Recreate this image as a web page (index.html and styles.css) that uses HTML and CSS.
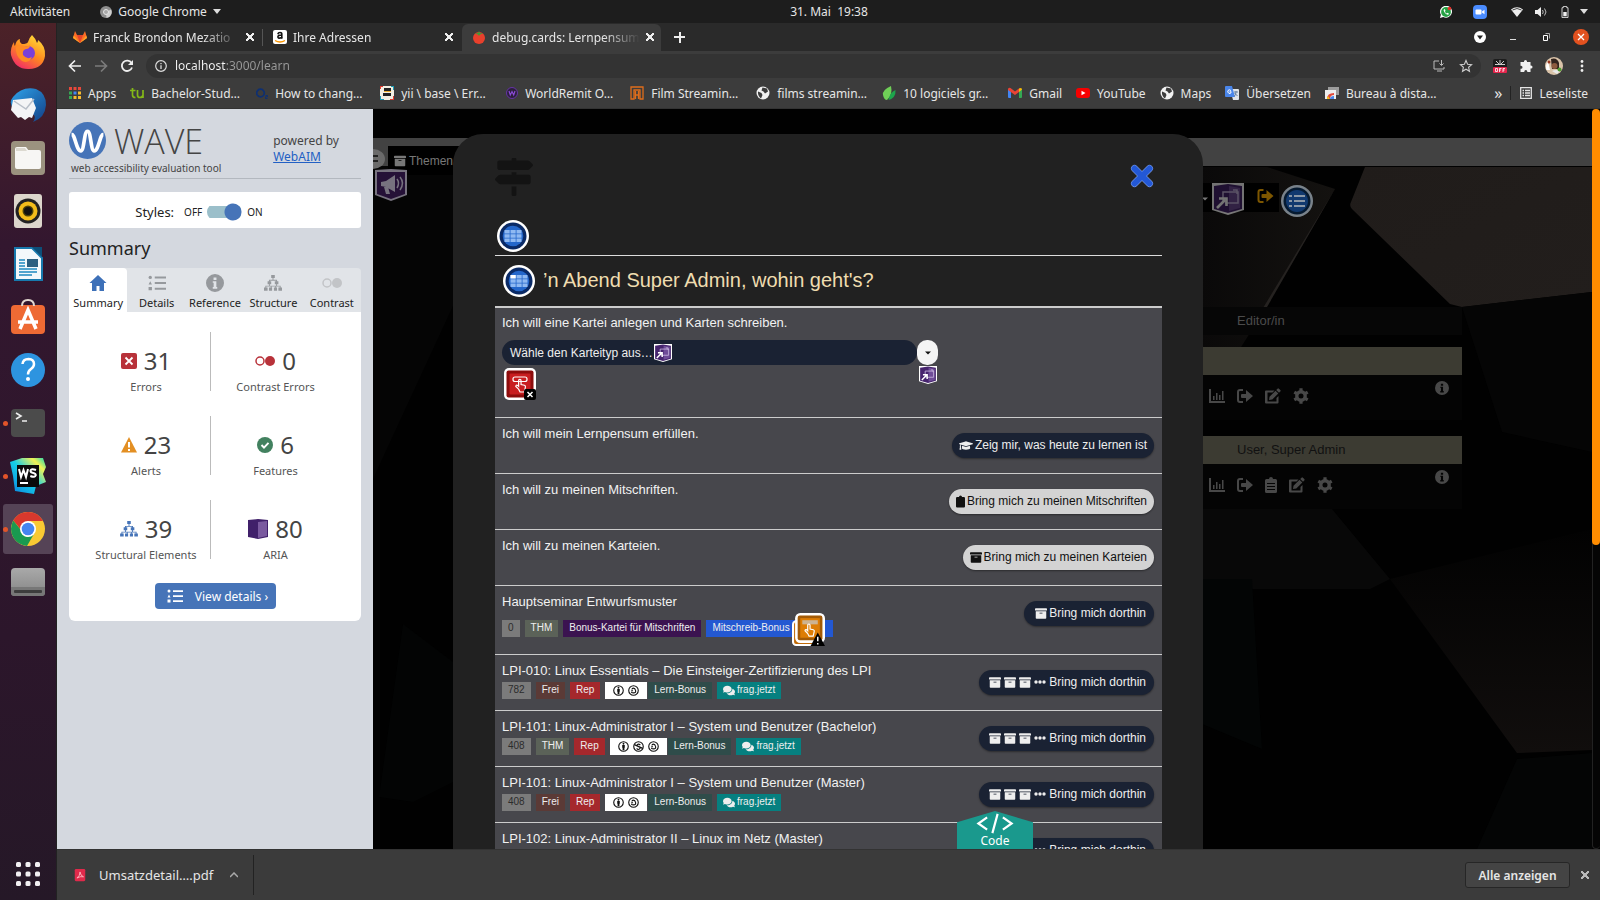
FILE: index.html
```html
<!DOCTYPE html>
<html lang="de">
<head>
<meta charset="utf-8">
<title>debug.cards: Lernpensum</title>
<link rel="stylesheet" href="styles.css">
</head>
<body>
<svg class="defs" aria-hidden="true">
  <defs>
    <linearGradient id="gFire" x1="0.8" y1="0" x2="0.2" y2="1"><stop offset="0" stop-color="#ffe03a"/><stop offset=".5" stop-color="#ff8a1e"/><stop offset="1" stop-color="#f0246e"/></linearGradient>
    <linearGradient id="gBird" x1="0" y1="0" x2="1" y2="1"><stop offset="0" stop-color="#2fa3ea"/><stop offset="1" stop-color="#123f86"/></linearGradient>
    <linearGradient id="gWs" x1="0" y1="1" x2="1" y2="0"><stop offset="0" stop-color="#0a7fe0"/><stop offset=".5" stop-color="#15cfe8"/><stop offset=".8" stop-color="#f3f254"/><stop offset="1" stop-color="#10d6b4"/></linearGradient>
    <linearGradient id="gDisk" x1="0" y1="0" x2="0" y2="1"><stop offset="0" stop-color="#a9a9a9"/><stop offset="1" stop-color="#868686"/></linearGradient>
  </defs>
  <symbol id="archive" viewBox="0 0 512 512"><path d="M32 448c0 17.7 14.3 32 32 32h384c17.7 0 32-14.3 32-32V160H32v288zm160-212c0-6.600 5.400-12 12-12h104c6.600 0 12 5.400 12 12v8c0 6.600-5.400 12-12 12H204c-6.600 0-12-5.400-12-12v-8zM480 32H32C14.300 32 0 46.300 0 64v48c0 8.800 7.200 16 16 16h480c8.800 0 16-7.200 16-16V64c0-17.700-14.300-32-32-32z"/></symbol>
  <symbol id="cap" viewBox="0 0 640 512"><path d="M622.340 153.200L343.400 67.500c-15.200-4.670-31.600-4.670-46.790 0L17.660 153.200c-23.540 7.230-23.540 38.360 0 45.590l48.630 14.940c-10.670 13.190-17.230 29.280-17.880 46.900C38.780 266.150 32 276.110 32 288c0 10.780 5.680 19.850 13.860 25.650L20.330 428.530C18.110 438.520 25.710 448 35.940 448h56.110c10.240 0 17.840-9.480 15.620-19.470L82.140 313.650C90.320 307.850 96 298.780 96 288c0-11.570-6.470-21.250-15.660-26.870.76-15.020 8.440-28.300 20.690-36.720L296.600 284.500c9.060 2.780 26.440 6.250 46.790 0l278.950-85.700c23.550-7.240 23.550-38.360 0-45.600zM352.790 315.090c-28.530 8.760-52.840 3.920-65.590 0l-145.020-44.550L128 384c0 35.350 85.960 64 192 64s192-28.650 192-64l-14.180-113.470-145.030 44.560z"/></symbol>
  <symbol id="signs" viewBox="0 0 512 512"><path d="M507.310 84.690L464 41.370c-6-6-14.140-9.370-22.630-9.370H288V16c0-8.840-7.160-16-16-16h-32c-8.840 0-16 7.160-16 16v16H56c-13.250 0-24 10.750-24 24v80c0 13.250 10.750 24 24 24h385.370c8.490 0 16.620-3.370 22.630-9.370l43.310-43.310c6.250-6.260 6.250-16.380 0-22.630zM224 496c0 8.840 7.160 16 16 16h32c8.840 0 16-7.160 16-16V384h-64v112zm232-272H288v-32h-64v32H70.630c-8.490 0-16.620 3.370-22.630 9.370L4.690 276.690c-6.250 6.250-6.250 16.380 0 22.630L48 342.630c6 6 14.140 9.370 22.630 9.370H456c13.250 0 24-10.750 24-24v-80c0-13.250-10.750-24-24-24z"/></symbol>
  <symbol id="comments" viewBox="0 0 576 512"><path d="M416 192c0-88.400-93.100-160-208-160S0 103.600 0 192c0 34.300 14.100 65.900 38 92-13.400 30.200-35.500 54.200-35.800 54.500-2.200 2.300-2.800 5.700-1.500 8.700S4.800 352 8 352c36.600 0 66.900-12.300 88.700-25 32.200 15.700 70.300 25 111.300 25 114.900 0 208-71.600 208-160zm122 220c23.900-26 38-57.700 38-92 0-66.900-53.500-124.200-129.300-148.100.9 6.600 1.300 13.300 1.300 20.100 0 105.900-107.700 192-240 192-10.800 0-21.300-.8-31.700-1.900C207.800 439.600 281.800 480 368 480c41 0 79.100-9.200 111.300-25 21.800 12.700 52.100 25 88.700 25 3.200 0 6.100-1.900 7.300-4.800 1.300-2.900.7-6.300-1.500-8.700-.3-.3-22.400-24.200-35.800-54.500z"/></symbol>
  <symbol id="clipboard" viewBox="0 0 12 16"><path d="M1.500 2H4a2 2 0 0 1 4 0h2.500A1.500 1.500 0 0 1 12 3.500v11a1.500 1.500 0 0 1-1.500 1.500h-9A1.500 1.500 0 0 1 0 14.500v-11A1.500 1.500 0 0 1 1.500 2z"/></symbol>
  <symbol id="cliplist" viewBox="0 0 12 16"><path fill-rule="evenodd" d="M1.500 2H4a2 2 0 0 1 4 0h2.500A1.500 1.500 0 0 1 12 3.500v11a1.500 1.500 0 0 1-1.500 1.500h-9A1.500 1.500 0 0 1 0 14.500v-11A1.500 1.500 0 0 1 1.500 2zM2 6v1h8V6zM2 9v1h8V9zM2 12v1h8v-1z"/></symbol>
  <symbol id="chart" viewBox="0 0 16 14"><path d="M0 0h2v12h14v2H0zM4 7h1.500v4H4zM7 4h1.500v7H7zM10 6h1.500v5H10zM13 2h1.500v9H13z"/></symbol>
  <symbol id="signout" viewBox="0 0 16 14"><path d="M6 0v2H3Q2 2 2 3v8q0 1 1 1h3v2H3q-3 0-3-3V3q0-3 3-3zM9 1l7 6-7 6v-4H5q-1 0-1-1V6q0-1 1-1h4z"/></symbol>
  <symbol id="edit" viewBox="0 0 16 16"><path d="M1 2.500h8.500l-2 2H2.500v9h9V10l2-2v6.500q0 1-1 1H1q-1 0-1-1v-11q0-1 1-1zM12.500.7q.7-.7 1.400 0l1.400 1.400q.7.7 0 1.400L14 4.800 11.200 2zM10.500 2.700l2.800 2.800-6 6L4 12l.5-3.300z"/></symbol>
  <symbol id="cog" viewBox="0 0 16 16"><circle cx="8" cy="8" r="4.200" fill="none" stroke="currentColor" stroke-width="3.400"/><g stroke="currentColor" stroke-width="3.200"><path d="M8 .3v3M8 12.700v3M1.300 4.200l2.600 1.500M12.100 10.300l2.600 1.500M1.300 11.800l2.600-1.500M12.100 5.700l2.600-1.500"/></g></symbol>
  <symbol id="info" viewBox="0 0 16 16"><path fill-rule="evenodd" d="M8 0a8 8 0 1 1 0 16A8 8 0 0 1 8 0zM6.700 3v2.300h2.600V3zM6 6.500v1.300h.8v3.700H6V13h4v-1.500h-.8v-5z"/></symbol>
  <symbol id="list" viewBox="0 0 16 14"><circle cx="2" cy="2" r="1.500"/><path d="M.5 8.400 2 5.500l1.500 2.900zM.5 10.500h3v3h-3zM6 1.200h10v1.700H6zM6 6.200h10v1.700H6zM6 11.200h10v1.700H6z"/></symbol>
  <symbol id="tree" viewBox="0 0 20 18"><path d="M8 0h4v3.500H8zM9.500 3.500h1v3h-1zM5.500 5.500h9v1h-9zM5.500 5.500h1v2h-1zM13.500 5.500h1v2h-1zM4 7h4v3.500H4zM12 7h4v3.500h-4zM5.500 10.500h1v2h-1zM13.500 10.500h1v2h-1zM1.500 12h17v1h-17zM1.500 12h1v2h-1zM7.500 12h1v2h-1zM12.500 12h1v2h-1zM17.500 12h1v2h-1zM0 14h4v3.500H0zM5.500 14h3.500v3.500H5.500zM11 14h3.500v3.500H11zM16 14h4v3.500h-4z"/></symbol>
  <symbol id="contrast" viewBox="0 0 20 10"><circle cx="5" cy="5" r="4" fill="none" stroke="currentColor" stroke-width="1.500"/><circle cx="15" cy="5" r="5"/></symbol>
  <symbol id="globe" viewBox="0 0 14 14"><circle cx="7" cy="7" r="6.500" fill="#f2f2f2"/><path d="M2 5.500 5.500 7l1 2-1.500 3.500Q1.500 10 2 5.500zM6.500 1.500 11 2.500l1 3-3 2-1.500-2-2-1z" fill="#3c3c3c"/></symbol>
  <symbol id="gridbadge" viewBox="0 0 32 32"><circle cx="16" cy="16" r="16" fill="#fff"/><circle cx="16" cy="16" r="13.500" fill="#0a2a66"/><circle cx="16" cy="16" r="10.300" fill="#2467cb"/><path d="M7.500 10h5.200v3.400H7.500zM13.500 10h5.200v3.400h-5.200zM19.500 10h5v3.400h-5zM7.500 14.300h5.200v3.400H7.500zM13.500 14.300h5.200v3.400h-5.200zM19.500 14.300h5v3.400h-5zM7.500 18.600h5.200V22H7.500zM13.500 18.600h5.200V22h-5.200zM19.500 18.600h5V22h-5z" fill="#8fb9f2"/></symbol>
  <symbol id="popup" viewBox="0 0 32 32"><path d="M0 0h32v27l-16 5-16-5z" fill="#fff"/><path d="M2 3 16 1l14 2v23l-14 4-14-4z" fill="#46246e"/><path d="M17 3l11 2v20l-11 3z" fill="#6f4c98"/><path d="M11 20V9h15v11H13M21 7h4v4" fill="none" stroke="#c9b6df" stroke-width="1.500"/><path d="M5 25l8-8M7 15.500h7.500V23" fill="none" stroke="#fff" stroke-width="2.600"/></symbol>
  <symbol id="horn" viewBox="0 0 32 32"><path d="M0 1 16 0l16 1v25l-16 6L0 26z" fill="#77737f"/><path d="M2 3h28v22l-14 5-14-5z" fill="#251137"/><path d="M6 13l5-1 9-6v17l-9-5-5-1zM9 18h4l2 7h-4z" fill="#77737f"/><path d="M22 10q3 4 0 9M25 8q5 6 0 13" fill="none" stroke="#77737f" stroke-width="1.500"/></symbol>
  <symbol id="hand" viewBox="0 0 16 18"><path d="M6 14 3 11q0-2 2-1l1 1V5q0-1.500 1.300-1.500T8.600 5v4l3.600.8q1.500.5 1 2.200L12 17H7.500z" fill="none" stroke="#fff" stroke-width="1.300"/></symbol>
  <symbol id="by" viewBox="0 0 12 12"><circle cx="6" cy="6" r="5.200" fill="#fff" stroke="#111" stroke-width="1.200"/><circle cx="6" cy="3" r="1"/><path d="M4.600 4.300h2.800v3H7v2.900H5V7.300h-.4z"/></symbol>
  <symbol id="nd" viewBox="0 0 12 12"><circle cx="6" cy="6" r="5.200" fill="#fff" stroke="#111" stroke-width="1.200"/><path d="M4.300 4.800Q4.300 3.400 6 3.400T8.300 6 6 8.600 4.300 7.400M3.500 6.200h2" fill="none" stroke="#111" stroke-width="1.200"/></symbol>
  <symbol id="nc" viewBox="0 0 12 12"><circle cx="6" cy="6" r="5.200" fill="#fff" stroke="#111" stroke-width="1.200"/><path d="M8 4.300Q6 2.600 4.800 4t1.400 2.200 1 2.400T4 8M1.500 4l9 4" fill="none" stroke="#111" stroke-width="1.300"/></symbol>
</svg>

<header class="topbar">
  <span>Aktivitäten</span>
  <span class="app-menu">
    <svg class="i12" viewBox="0 0 12 12"><circle cx="6" cy="6" r="6" fill="#8e8e8e"/><path d="M6 6 11 3.500A6 6 0 0 1 6.500 12z" fill="#cfcfcf"/><circle cx="6" cy="6" r="2.500" fill="#a8a8a8" stroke="#e5e5e5"/></svg>
    Google Chrome
    <svg class="i8" viewBox="0 0 8 6"><path d="M0 0h8L4 5z" fill="#ddd"/></svg>
  </span>
  <time class="clock">31. Mai&nbsp; 19:38</time>
  <span class="tray">
    <svg class="i12" viewBox="0 0 12 12"><path d="M0 12l.9-3.200A6 6 0 1 1 3.200 11z" fill="#fff"/><circle cx="6" cy="6" r="4.900" fill="#25a244"/><path d="M4 3.200q-1 1 .4 3t3.300 2.500q1 0 1.300-1L7.500 6.800l-.8.7Q5.500 7 4.900 5.700l.6-.8L5 3.200z" fill="#fff"/><circle cx="9.500" cy="2.500" r="1.800" fill="#e5302a"/></svg>
    <svg class="i14 zoomapp" viewBox="0 0 14 14"><rect width="14" height="14" rx="4" fill="#4a8cff"/><rect x="2.500" y="4.500" width="6" height="5" rx="1" fill="#fff"/><path d="M9 6.500 11.500 4.700v4.600L9 7.500z" fill="#fff"/></svg>
    <svg class="i12" viewBox="0 0 12 10"><path d="M0 2.500Q6-2 12 2.500L6 10z" fill="#eee"/><path d="M1.500 3Q6 0 10.500 3" stroke="#444" fill="none"/></svg>
    <svg class="i12" viewBox="0 0 12 12"><path d="M0 4h2.500L6 1v10L2.500 8H0z" fill="#eee"/><path d="M7.500 4q1.500 2 0 4M9.500 2.500q3 3.500 0 7" stroke="#bbb" fill="none"/></svg>
    <svg class="i12" viewBox="0 0 12 14"><path d="M2.500 2H4V.5h4V2h1.500v11.500h-7z" fill="none" stroke="#eee"/><path d="M4 7h4v5H4z" fill="#eee"/></svg>
    <svg class="i8" viewBox="0 0 8 6"><path d="M0 0h8L4 5z" fill="#ddd"/></svg>
  </span>
</header>

<div class="desktop">
  <nav class="dock" aria-label="Dock">
    <a href="#" aria-label="Firefox"><svg viewBox="0 0 36 36"><path d="M22 1q4 4 5 8 1-1 1-3 8 6 7 16-2 12.500-16 13T1 21Q0 14 4 8q0 3 1 4 1-6 5-7-1 3 2 5 5 0 6-2 1-4 4-7z" fill="url(#gFire)"/><circle cx="18" cy="19" r="7" fill="#7b3fd8"/><path d="M6 13q3-3 8-1 3 1 6-1 0 4-4 4-4 1-3 6 4 5 9 2-3 7-10 4-7-5-6-14z" fill="#ff8a24"/></svg></a>
    <a href="#" aria-label="Thunderbird"><svg viewBox="0 0 36 36"><path d="M3 10Q12-1 26 2q10 4 10 16-1 13-13 17 3-4 1-7L4 22Q-2 16 3 10z" fill="url(#gBird)"/><path d="M3 13 22 11l4 10-4 10-3-1-4 3-4-3-3 1-7-8z" fill="#f4f4f6"/><path d="M4 14l12 8 8-10" fill="none" stroke="#b9bfc9" stroke-width="1.500"/></svg></a>
    <a href="#" aria-label="Dateien"><svg viewBox="0 0 36 36"><rect x="1" y="1" width="34" height="34" rx="4" fill="#9b927f"/><path d="M5 9q0-2 2-2h9l3 4h-14zM5 10h24q2 0 2 2v15q0 2-2 2H7q-2 0-2-2z" fill="#f7f6f4"/><path d="M6 8h9l2 3H6z" fill="#dcd9d0"/></svg></a>
    <a href="#" aria-label="Rhythmbox"><svg viewBox="0 0 36 36"><rect x="4" y="1" width="28" height="34" rx="3" fill="#dcd6cc"/><circle cx="18" cy="18" r="12.500" fill="#222"/><circle cx="18" cy="18" r="9.500" fill="#f3bd1b"/><circle cx="18" cy="18" r="5.500" fill="#4c4108"/><circle cx="18" cy="18" r="4" fill="#111"/></svg></a>
    <a href="#" aria-label="LibreOffice Writer"><svg viewBox="0 0 36 36"><path d="M5 2h17l10 10v22H5z" fill="#f3f8fb" stroke="#1779ad" stroke-width="2"/><path d="M22 1h10v10z" fill="#0c4f79"/><path d="M9 14h6M9 17h6M9 20h6M9 23h18M9 26h18M9 29h13" stroke="#1e88c0" stroke-width="1.500"/><rect x="17" y="13" width="11" height="8" fill="#2b5f80"/></svg></a>
    <a href="#" aria-label="Ubuntu Software"><svg viewBox="0 0 36 36"><rect x="1" y="6" width="34" height="29" rx="4" fill="#ee6a34"/><path d="M12 7q0-6 6-6t6 6" fill="none" stroke="#e2d8d0" stroke-width="2"/><path d="M10 30 18 11l8 19M8 23h20" fill="none" stroke="#fff" stroke-width="3.500"/></svg></a>
    <a href="#" aria-label="Hilfe"><svg viewBox="0 0 36 36"><circle cx="18" cy="18" r="17" fill="#2d94e0"/><path d="M12.500 12q.5-5 6-5 5.500.3 5.500 5 0 3-3 5t-3 5.500" fill="none" stroke="#fff" stroke-width="2.500"/><circle cx="18" cy="27" r="2" fill="#fff"/></svg></a>
    <a href="#" class="running" aria-label="Terminal"><svg viewBox="0 0 36 36"><rect x="1" y="4" width="34" height="28" rx="4" fill="#4b4b4b"/><path d="M6 8l5 3-5 3M12 16h5" fill="none" stroke="#eee" stroke-width="1.600"/></svg></a>
    <a href="#" class="running" aria-label="WebStorm"><svg viewBox="0 0 36 36"><path d="M0 4 12 0h21l3 9-3 7 3 8-10 4-2 8L5 33 3 18z" fill="url(#gWs)"/><rect x="7" y="7" width="22" height="22" fill="#0a0a0a"/><path d="M9 11l2 8 2.500-7 2.500 7 2-8M26 12q-5-2-5.500.7 0 1.800 2.700 2.300t2.600 2.300q-.8 2.600-5.500.7M10 25h8" fill="none" stroke="#fff" stroke-width="2"/></svg></a>
    <a href="#" class="running current" aria-label="Google Chrome"><svg viewBox="0 0 36 36"><circle cx="18" cy="18" r="17" fill="#f9c933"/><path d="M3.300 9.500A17 17 0 0 1 33 10H18l-6 10z" fill="#d8382d"/><path d="M3.300 9.500A17 17 0 0 0 17 35l7.500-13-8 4z" fill="#1a9a50"/><circle cx="18" cy="18" r="8" fill="#fff"/><circle cx="18" cy="18" r="6.300" fill="#4485f0"/></svg></a>
    <a href="#" aria-label="Laufwerk"><svg viewBox="0 0 36 36"><rect x="1" y="4" width="34" height="28" rx="4" fill="url(#gDisk)"/><path d="M1 23h34v6q0 3-3 3H4q-3 0-3-3z" fill="#777"/><rect x="4" y="26" width="28" height="3" rx="1" fill="#3d3d3d"/></svg></a>
    <a href="#" class="all-apps" aria-label="Anwendungen anzeigen"><svg viewBox="0 0 36 36"><g fill="#f2f0f2"><rect x="6" y="6" width="5" height="5" rx="1.500"/><rect x="15.500" y="6" width="5" height="5" rx="1.500"/><rect x="25" y="6" width="5" height="5" rx="1.500"/><rect x="6" y="15.500" width="5" height="5" rx="1.500"/><rect x="15.500" y="15.500" width="5" height="5" rx="1.500"/><rect x="25" y="15.500" width="5" height="5" rx="1.500"/><rect x="6" y="25" width="5" height="5" rx="1.500"/><rect x="15.500" y="25" width="5" height="5" rx="1.500"/><rect x="25" y="25" width="5" height="5" rx="1.500"/></g></svg></a>
  </nav>

  <div class="window">
    <div class="tabstrip">
      <div class="tab divided">
        <svg class="i14" viewBox="0 0 14 14"><path d="M7 13 0 8 2 1l2 4h6l2-4 2 7z" fill="#fc6d26"/><path d="M7 13 4 5h6z" fill="#e24329"/><path d="M7 13 0 8l.8-2.500zM7 13l7-5-.8-2.500z" fill="#fca326"/></svg>
        <span class="tab-title">Franck Brondon Mezatio</span><button class="x" aria-label="Tab schließen"></button>
      </div>
      <div class="tab">
        <svg class="i14" viewBox="0 0 14 14"><rect width="14" height="14" rx="2" fill="#fff"/><path d="M4.800 4.200Q5.200 2.500 7 2.500T8.800 4v3q0 1 .6 1.500M8.600 5Q4.800 4.900 4.900 7t3.700.4" fill="none" stroke="#111" stroke-width="1.600"/><path d="M2 10.500q5 3 10 0" fill="none" stroke="#f79400" stroke-width="1.300"/></svg>
        <span class="tab-title">Ihre Adressen</span><button class="x" aria-label="Tab schließen"></button>
      </div>
      <div class="tab active">
        <svg class="i14" viewBox="0 0 14 14"><circle cx="7" cy="8" r="6" fill="#e8402c"/><path d="M3 3.500l3-.5 1-2 1 2 3 .5-3 1-1 1.500-1-1.500z" fill="#3f9a36"/></svg>
        <span class="tab-title">debug.cards: Lernpensum</span><button class="x" aria-label="Tab schließen"></button>
      </div>
      <button class="plus" aria-label="Neuer Tab"></button>
      <div class="window-buttons">
        <button aria-label="Tabs suchen"><svg class="i12" viewBox="0 0 12 12"><circle cx="6" cy="6" r="6" fill="#fff"/><path d="M3 4.500h6L6 8.500z" fill="#222"/></svg></button>
        <button aria-label="Minimieren"><svg class="i12" viewBox="0 0 12 12"><path d="M3 8.500h6" stroke="#ddd"/></svg></button>
        <button aria-label="Wiederherstellen"><svg class="i12" viewBox="0 0 12 12"><path d="M3.500 4.500h4v5h-4z" stroke="#fff" fill="none"/><path d="M5.500 2.500h4v5" stroke="#aaa" fill="none"/></svg></button>
        <button aria-label="Schließen"><svg class="i16" viewBox="0 0 16 16"><circle cx="8" cy="8" r="8" fill="#e2511f"/><path d="M5 5l6 6M11 5l-6 6" stroke="#fff" stroke-width="1.300"/></svg></button>
      </div>
    </div>

    <div class="toolbar">
      <button aria-label="Zurück"><svg class="i14" viewBox="0 0 14 14"><path d="M13 7H2M7 1.500 1.500 7 7 12.500" fill="none" stroke="#eee" stroke-width="1.700"/></svg></button>
      <button aria-label="Vorwärts"><svg class="i14" viewBox="0 0 14 14"><path d="M1 7h11M7 1.500 12.500 7 7 12.500" fill="none" stroke="#7b7b7b" stroke-width="1.700"/></svg></button>
      <button aria-label="Neu laden"><svg class="i14" viewBox="0 0 14 14"><path d="M11.500 4A5.200 5.200 0 1 0 12 8.500" fill="none" stroke="#eee" stroke-width="1.800"/><path d="M13 1v5H8z" fill="#eee"/></svg></button>
      <div class="omnibox">
        <svg class="i12" viewBox="0 0 12 12"><circle cx="6" cy="6" r="5.300" fill="none" stroke="#ddd" stroke-width="1.200"/><path d="M6 5.300V9M6 3v1.300" stroke="#ddd" stroke-width="1.300"/></svg>
        <input class="address" type="text" value="localhost:3000/learn" aria-label="Adresse">
        <svg class="i12" viewBox="0 0 12 12"><path d="M6 1H1v8h10V7M4 11h5M8.500 0v5M6.500 3.500l2 2 2-2" fill="none" stroke="#bbb"/></svg>
        <svg class="i14" viewBox="0 0 14 14"><path d="M7 1.500 8.600 5.200l4 .4-3 2.700.9 4L7 10.200 3.500 12.300l.9-4-3-2.700 4-.4z" fill="none" stroke="#ccc" stroke-width="1.100"/></svg>
      </div>
      <svg class="i14" viewBox="0 0 14 14"><rect width="14" height="14" rx="2" fill="#1d1d1d"/><path d="M7 1v5M3 2l3 3M11 2 8 5M2 5.500h10" stroke="#ccc"/><rect y="8" width="14" height="6" rx="1" fill="#e5264d"/><path d="M2.500 9.500h2v3h-2zM6.500 13V9.500h2M6.500 11H8M10 13V9.500h2M10 11h1.500" stroke="#fff" stroke-width=".8" fill="none"/></svg>
      <svg class="i14" viewBox="0 0 14 14"><path d="M5 2.500a1.500 1.500 0 0 1 3 0V3h3.500v3.500h.5a1.500 1.500 0 0 1 0 3h-.5V13H8.300v-.5a1.500 1.500 0 0 0-3 0v.5H1.500V9.700H2a1.500 1.500 0 0 0 0-3h-.5V3H5z" fill="#f1f1f1"/></svg>
      <svg class="i18" viewBox="0 0 18 18"><circle cx="9" cy="9" r="9" fill="#d9c3a9"/><path d="M6 2q6-2 8 4v6H7z" fill="#33241d"/><circle cx="9.500" cy="9" r="3" fill="#8d5a3d"/><path d="M3 4l2 9H1.500Q0 8 3 4z" fill="#fff"/><path d="M7 14q4-2 8 0l-3 3z" fill="#e9e9e9"/><circle cx="14.500" cy="12.500" r="2" fill="#4f9c31"/><circle cx="4" cy="5" r="1.500" fill="#9c3a24"/></svg>
      <svg class="i14" viewBox="0 0 14 14"><g fill="#eee"><circle cx="7" cy="2.500" r="1.400"/><circle cx="7" cy="7" r="1.400"/><circle cx="7" cy="11.500" r="1.400"/></g></svg>
    </div>

    <nav class="bookmarks" aria-label="Lesezeichen">
      <a href="#"><svg class="i12" viewBox="0 0 12 12"><path fill="#e8483b" d="M0 0h3v3H0zM4.500 0h3v3h-3zM9 0h3v3H9z"/><path fill="#35a853" d="M0 4.500h3v3H0z"/><path fill="#4484f3" d="M4.500 4.500h3v3h-3z"/><path fill="#f9bb2d" d="M9 4.500h3v3H9zM4.500 9h3v3h-3zM9 9h3v3H9z"/><path fill="#35a853" d="M0 9h3v3H0z"/></svg>Apps</a>
      <a href="#"><svg class="i14" viewBox="0 0 14 14"><path d="M2.500 2v7q0 2.500 3 2.500M0 4.500h5.500M7.500 4v5q0 2.500 2.500 2.500t3-2.500V4M13 9v3" fill="none" stroke="#84b818" stroke-width="1.700"/></svg><span class="cut">Bachelor-Stud…</span></a>
      <a href="#"><svg class="i12" viewBox="0 0 12 12"><circle cx="4.500" cy="6" r="3.800" fill="none" stroke="#0d2f72" stroke-width="1.700"/><path d="M9.500 8.500h2v1.300h-2v1.700h2" fill="none" stroke="#0d2f72"/></svg><span class="cut">How to chang…</span></a>
      <a href="#"><svg class="i14" viewBox="0 0 14 14"><rect width="14" height="14" fill="#f3efe2"/><path d="M4 2h7v3H4zM3 7h8v3H3z" fill="#222"/><path d="M0 0h3v1H1v2H0zM14 14h-4v-1h3v-3h1z" fill="#e03c31"/><path d="M14 0v4h-1V1h-2V0zM0 14v-4h1v3h3v1z" fill="#1d9bb5"/><path d="M4 5.500h7" stroke="#efae2c"/></svg><span class="cut">yii \ base \ Err…</span></a>
      <a href="#"><svg class="i12" viewBox="0 0 12 12"><circle cx="6" cy="6" r="5.500" fill="#2c1f3c" stroke="#6633a6"/><path d="M3 4l1.300 4L6 4.500 7.700 8 9 4" fill="none" stroke="#8a4bd6" stroke-width="1.200"/></svg><span class="cut">WorldRemit O…</span></a>
      <a href="#"><svg class="i14" viewBox="0 0 14 14"><path d="M1 13V1h12v12h-3V4H4v9zM5.500 5v8M8.500 5v8M5.500 9h3" fill="none" stroke="#e06d1b" stroke-width="1.300"/></svg><span class="cut">Film Streamin…</span></a>
      <a href="#"><svg class="i14"><use href="#globe"/></svg><span class="cut">films streamin…</span></a>
      <a href="#"><svg class="i14" viewBox="0 0 14 14"><path d="M9 0Q0 4 1 9t4 5q6-5 4-14z" fill="#6fcf57"/><path d="M13.500 4Q8 6 6.500 14 14 12 13.500 4z" fill="#1da54c"/></svg><span class="cut">10 logiciels gr…</span></a>
      <a href="#"><svg class="i14" viewBox="0 0 14 14"><path d="M0 3h3v9H1q-1 0-1-1z" fill="#4285f4"/><path d="M11 3h3v8q0 1-1 1h-2z" fill="#34a853"/><path d="M0 3.500Q0 1 2.500 2L7 5.500 11.500 2 11 6 7 9 0 4z" fill="#ea4335"/><path d="M11 2.500q3-1.500 3 1L11 6z" fill="#fbbc04"/></svg>Gmail</a>
      <a href="#"><svg class="i14" viewBox="0 0 14 14"><rect y="2" width="14" height="10" rx="3" fill="#f60000"/><path d="M5.500 4.800 9.500 7l-4 2.200z" fill="#fff"/></svg>YouTube</a>
      <a href="#"><svg class="i14"><use href="#globe"/></svg>Maps</a>
      <a href="#"><svg class="i14" viewBox="0 0 14 14"><path d="M5 3h8q1 0 1 1v9q0 1-1 1H8z" fill="#dfe3e8"/><path d="M0 1q0-1 1-1h6l3 11H1q-1 0-1-1z" fill="#4a86ea"/><path d="M6 4.500Q4 3 3 4.500t1 3q2 .5 2.200-1.700H4.500" fill="none" stroke="#fff"/><path d="M9 6h4M11 5v1q0 3-2 4.500M9.500 7l3 3" stroke="#5a7699" fill="none" stroke-width=".9"/></svg>Übersetzen</a>
      <a href="#"><svg class="i14" viewBox="0 0 14 14"><path d="M3 1h11v8H3z" fill="#9c9c9c"/><path d="M0 4h11v9H0z" fill="#eee"/><path d="M2 13q0-6 7-6v2q-4 0-4 4z" fill="#e2483a"/><path d="M5 13q0-3 4-3v3z" fill="#4a86ea"/><path d="M2 13q0-2 1-3l2 3z" fill="#f5bd1c"/></svg><span class="cut">Bureau à dista…</span></a>
      <span class="bm-end"><span class="more">»</span><a href="#"><svg class="i12" viewBox="0 0 12 12"><path d="M.7.700h10.600v10.600H.7zM2.500 3.500H4M5 3.500h5M2.500 6H4M5 6h5M2.500 8.500H4M5 8.500h5" fill="none" stroke="#e5e5e5" stroke-width="1.300"/></svg>Leseliste</a></span>
    </nav>

    <main class="content">
      <aside class="wave">
        <div class="wave-head">
          <div>
            <div class="wave-logo">
              <svg viewBox="0 0 36 36"><circle cx="18" cy="18" r="18" fill="#4674b8"/><path d="M2.500 12C6 12 7 28 11.500 28 15 28 14.500 9 18 9s3 19 6.500 19C29 28 30 12 33.500 12" fill="none" stroke="#fff" stroke-width="3.600"/></svg>
              <span>WAVE</span>
            </div>
            <div class="wave-sub">web accessibility evaluation tool</div>
          </div>
          <p class="powered">powered by<br><a href="#">WebAIM</a></p>
        </div>
        <div class="styles-box">
          <span class="styles-label">Styles:</span>
          <label for="styles" class="onoff">OFF</label>
          <input id="styles" class="toggle" type="checkbox" checked aria-label="Styles">
          <span class="onoff">ON</span>
        </div>
        <h2>Summary</h2>
        <div class="wave-tabs">
          <button class="on"><svg viewBox="0 0 18 18"><path d="M9 1l8.500 8H15v8h-4.500v-5h-3v5H3V9H.5z"/></svg>Summary</button>
          <button><svg><use href="#list"/></svg>Details</button>
          <button><svg><use href="#info"/></svg>Reference</button>
          <button><svg><use href="#tree"/></svg>Structure</button>
          <button class="faint"><svg><use href="#contrast"/></svg>Contrast</button>
        </div>
        <div class="wave-body">
          <dl class="stats">
            <div><dd><svg viewBox="0 0 16 16"><rect width="16" height="16" rx="2" fill="#b8323a"/><path d="M4.500 4.500l7 7M11.500 4.500l-7 7" stroke="#fff" stroke-width="1.800"/></svg>31</dd><dt>Errors</dt></div>
            <div><dd><svg class="wide red"><use href="#contrast"/></svg>0</dd><dt>Contrast Errors</dt></div>
            <div><dd><svg viewBox="0 0 16 16"><path d="M8 0l8 15.500H0z" fill="#e38f23"/><path d="M8 5v5.500M8 12v2" stroke="#fff" stroke-width="2"/></svg>23</dd><dt>Alerts</dt></div>
            <div><dd><svg viewBox="0 0 16 16"><circle cx="8" cy="8" r="8" fill="#42815f"/><path d="M4.500 8l2.500 2.700 4.500-4.900" fill="none" stroke="#fff" stroke-width="1.900"/></svg>6</dd><dt>Features</dt></div>
            <div><dd><svg class="blue"><use href="#tree"/></svg>39</dd><dt>Structural Elements</dt></div>
            <div><dd><svg class="wide" viewBox="0 0 20 20"><path d="M0 1l10-1 10 1v17l-10 2-10-2z" fill="#40206a"/><path d="M10 3l9-1v15l-9 2z" fill="#7a5a9f"/></svg>80</dd><dt>ARIA</dt></div>
          </dl>
          <button class="view"><svg><use href="#list"/></svg>View details ›</button>
        </div>
      </aside>

      <div class="site">
        <svg class="backdrop" viewBox="0 0 1219 740" preserveAspectRatio="none" aria-hidden="true">
          <defs>
            <linearGradient id="b1" x1="0" y1="0" x2="1" y2="1"><stop offset="0" stop-color="#201c1a"/><stop offset="1" stop-color="#221e1c"/></linearGradient>
            <linearGradient id="b2" x1="0" y1="0" x2="1" y2="0"><stop offset="0" stop-color="#0a0909"/><stop offset="1" stop-color="#141210"/></linearGradient>
            <linearGradient id="b3" x1="0" y1="0" x2="0" y2="1"><stop offset="0" stop-color="#020202"/><stop offset="1" stop-color="#110e0d"/></linearGradient>
          </defs>
          <rect width="1219" height="740" fill="#010101"/>
          <path d="M0 57h80v140L0 370z" fill="#050505"/>
          <path d="M30 515l50 38v120l-40 20-34-5z" fill="#030404"/>
          <path d="M829 58h65l68 22-70 120-63 100z" fill="url(#b2)"/>
          <path d="M962 80l-72 125-3-1z" fill="#252220"/>
          <path d="M992 58h227v125l-130 15-12-3-98-95q-3-3-1-7z" fill="url(#b1)"/>
          <path d="M1089 198l130-15v160l-90-20z" fill="#050505"/>
          <path d="M829 400h130l58 70-20 10H829z" fill="#080808"/>
          <path d="M1017 470l127 174 75-3V420z" fill="url(#b3)"/>
          <path d="M829 470h50l10 170-60-25z" fill="#030505"/>
          <path d="M1144 650l75-6v96h-115z" fill="#040505"/>
        </svg>
        <div class="band"></div>
        <svg class="menu-dot" viewBox="0 0 24 20"><ellipse cx="12" cy="10" rx="12" ry="10" fill="#6b6b6b"/><path d="M8 7h9M8 12h9" stroke="#222" stroke-width="2"/></svg>
        <a href="#" class="themes"><svg class="i12"><use href="#archive"/></svg>Themen</a>
        <svg class="horn"><use href="#horn"/></svg>
        <div class="user-nav"><svg class="caret" viewBox="0 0 8 4"><path d="M0 0h8L4 4z" fill="#777"/></svg><svg class="b32"><use href="#popup"/></svg><svg class="exit"><use href="#signout"/></svg></div>
        <svg class="listbadge" viewBox="0 0 32 32"><circle cx="16" cy="16" r="16" fill="#79828a"/><circle cx="16" cy="16" r="13.500" fill="#061a30"/><circle cx="16" cy="16" r="11" fill="#11396f"/><path d="M8 11h3M13 11h11M8 16h3M13 16h11M8 21h3M13 21h11" stroke="#8a97a6" stroke-width="2.200"/></svg>
        <div class="cards">
          <div class="card-head"><span>Editor/in</span></div>
          <div class="card">
            <div class="stripe"><span></span></div>
            <div class="tools"><div><svg><use href="#chart"/></svg><svg><use href="#signout"/></svg><svg><use href="#edit"/></svg><svg><use href="#cog"/></svg></div><svg class="inf"><use href="#info"/></svg></div>
          </div>
          <div class="card">
            <div class="stripe"><span>User, Super Admin</span></div>
            <div class="tools"><div><svg><use href="#chart"/></svg><svg><use href="#signout"/></svg><svg class="thin"><use href="#cliplist"/></svg><svg><use href="#edit"/></svg><svg><use href="#cog"/></svg></div><svg class="inf"><use href="#info"/></svg></div>
          </div>
        </div>
      </div>
      <div class="scroll"><div class="thumb"></div></div>

      <section class="modal" aria-label="Wohin geht's?">
        <div class="modal-head">
          <svg class="signs"><use href="#signs"/></svg>
          <button class="close" aria-label="Schließen"><svg viewBox="0 0 24 24"><path d="M4.500 4.500l15 15M19.500 4.500l-15 15" stroke="#7fa0e6" stroke-width="7" stroke-linecap="round"/><path d="M4.500 4.500l15 15M19.500 4.500l-15 15" stroke="#2358d6" stroke-width="6" stroke-linecap="round"/></svg></button>
        </div>
        <div class="badge-row"><svg class="b32"><use href="#gridbadge"/></svg></div>
        <h1><svg class="b32" viewBox="0 0 32 32"><use href="#gridbadge" width="32" height="32"/><path d="M7.500 10h5.200v3.400H7.500z" fill="#fff"/></svg>’n Abend Super Admin, wohin geht's?</h1>
        <table>
          <tbody>
          <tr class="create"><td colspan="2"><p>Ich will eine Kartei anlegen und Karten schreiben.</p>
            <div class="combo"><button class="pick">Wähle den Karteityp aus…<svg class="b18"><use href="#popup"/></svg></button><div class="drop"><button aria-label="Auswahl öffnen"><svg viewBox="0 0 8 4"><path d="M0 0h8L4 4z"/></svg></button><svg class="b18"><use href="#popup"/></svg></div></div>
            <svg class="err" viewBox="0 0 32 32"><rect width="32" height="32" rx="5" fill="#fff"/><rect x="2.500" y="2.500" width="27" height="27" rx="2" fill="#8d0d0d"/><rect x="5.500" y="5.500" width="21" height="21" rx="1" fill="#c81e20"/><rect x="9" y="9" width="14" height="4.500" rx="2" fill="none" stroke="#fff" stroke-width="1.200"/><use href="#hand" x="9" y="8" width="15" height="17"/><rect x="20" y="21" width="12" height="11" rx="2" fill="#000"/><path d="M23.500 24l5 5M28.500 24l-5 5" stroke="#fff" stroke-width="1.500"/></svg>
          </td></tr>
          <tr><td><p>Ich will mein Lernpensum erfüllen.</p></td><td class="act"><button class="pill tight"><svg class="capi"><use href="#cap"/></svg>Zeig mir, was heute zu lernen ist</button></td></tr>
          <tr><td><p>Ich will zu meinen Mitschriften.</p></td><td class="act"><button class="pill light tight"><svg class="clipi"><use href="#clipboard"/></svg>Bring mich zu meinen Mitschriften</button></td></tr>
          <tr><td><p>Ich will zu meinen Karteien.</p></td><td class="act"><button class="pill light tight"><svg><use href="#archive"/></svg>Bring mich zu meinen Karteien</button></td></tr>
          <tr class="tall"><td><p>Hauptseminar Entwurfsmuster</p><div class="tags"><span class="n">0</span><span class="thm">THM</span><span class="bonus">Bonus-Kartei für Mitschriften</span><span class="mit">Mitschreib-Bonus<svg class="warn" viewBox="0 0 32 32"><rect x="0" y="7" width="26" height="25" rx="4" fill="#fff"/><rect x="2" y="9" width="22" height="21" rx="2" fill="#c06a08"/><rect x="3" y="0" width="29" height="29" rx="5" fill="#fff"/><rect x="5.500" y="2.500" width="24" height="24" rx="2" fill="#a35b07"/><rect x="8" y="5" width="19" height="19" fill="#dd7d05"/><rect x="10" y="7" width="15" height="4" fill="#cdb391"/><use href="#hand" x="10" y="7" width="14" height="17"/><path d="M25 19l7 13H18z" fill="#000"/><path d="M25 23v4.500M25 29v1.500" stroke="#fff" stroke-width="1.400"/></svg></span></div></td><td class="act"><button class="pill"><svg><use href="#archive"/></svg>Bring mich dorthin</button></td></tr>
          <tr><td><p>LPI-010: Linux Essentials – Die Einsteiger-Zertifizierung des LPI</p><div class="tags"><span class="n">782</span><span class="frei">Frei</span><span class="rep">Rep</span><span class="cc"><svg><use href="#by"/></svg><svg><use href="#nd"/></svg></span><span class="lern">Lern-Bonus</span><span class="frag"><svg><use href="#comments"/></svg>frag.jetzt</span></div></td><td class="act"><button class="pill many"><svg><use href="#archive"/></svg><svg><use href="#archive"/></svg><svg><use href="#archive"/></svg><svg class="dots" viewBox="0 0 12 12"><circle cx="2" cy="6" r="1.700"/><circle cx="6" cy="6" r="1.700"/><circle cx="10" cy="6" r="1.700"/></svg>Bring mich dorthin</button></td></tr>
          <tr><td><p>LPI-101: Linux-Administrator I – System und Benutzer (Bachelor)</p><div class="tags"><span class="n">408</span><span class="thm">THM</span><span class="rep">Rep</span><span class="cc"><svg><use href="#by"/></svg><svg><use href="#nc"/></svg><svg><use href="#nd"/></svg></span><span class="lern">Lern-Bonus</span><span class="frag"><svg><use href="#comments"/></svg>frag.jetzt</span></div></td><td class="act"><button class="pill many"><svg><use href="#archive"/></svg><svg><use href="#archive"/></svg><svg><use href="#archive"/></svg><svg class="dots" viewBox="0 0 12 12"><circle cx="2" cy="6" r="1.700"/><circle cx="6" cy="6" r="1.700"/><circle cx="10" cy="6" r="1.700"/></svg>Bring mich dorthin</button></td></tr>
          <tr><td><p>LPI-101: Linux-Administrator I – System und Benutzer (Master)</p><div class="tags"><span class="n">408</span><span class="frei">Frei</span><span class="rep">Rep</span><span class="cc"><svg><use href="#by"/></svg><svg><use href="#nd"/></svg></span><span class="lern">Lern-Bonus</span><span class="frag"><svg><use href="#comments"/></svg>frag.jetzt</span></div></td><td class="act"><button class="pill many"><svg><use href="#archive"/></svg><svg><use href="#archive"/></svg><svg><use href="#archive"/></svg><svg class="dots" viewBox="0 0 12 12"><circle cx="2" cy="6" r="1.700"/><circle cx="6" cy="6" r="1.700"/><circle cx="10" cy="6" r="1.700"/></svg>Bring mich dorthin</button></td></tr>
          <tr><td><p>LPI-102: Linux-Administrator II – Linux im Netz (Master)</p></td><td class="act"><button class="pill many"><svg><use href="#archive"/></svg><svg><use href="#archive"/></svg><svg><use href="#archive"/></svg><svg class="dots" viewBox="0 0 12 12"><circle cx="2" cy="6" r="1.700"/><circle cx="6" cy="6" r="1.700"/><circle cx="10" cy="6" r="1.700"/></svg>Bring mich dorthin</button></td></tr>
          </tbody>
        </table>
      </section>
      <button class="code"><svg viewBox="0 0 42 24"><path d="M12 5 2 12l10 7M30 5l10 7-10 7M24 1l-6 22" fill="none" stroke="#fff" stroke-width="2.500"/></svg>Code</button>
    </main>

    <footer class="downloads">
      <div class="dl">
        <svg class="i14" viewBox="0 0 14 16"><rect x="1" y="1" width="12" height="14" rx="1.500" fill="#e02a4b"/><path d="M3.500 11.500Q7 9 7 4.500 7.500 9 11 10q-4-.8-7.500 1.500z" fill="none" stroke="#ffb9c4"/></svg>
        <span>Umsatzdetail….pdf</span>
        <button aria-label="Menü"><svg class="i8" viewBox="0 0 8 6"><path d="M0 5l4-4 4 4" fill="none" stroke="#aaa" stroke-width="1.500"/></svg></button>
      </div>
      <button class="all">Alle anzeigen</button>
      <button class="x dim" aria-label="Leiste schließen"></button>
    </footer>
  </div>
</div>
</body>
</html>
```
FILE: styles.css
```css
* { box-sizing: border-box; }
body {
  margin: 0; height: 100vh; overflow: hidden;
  display: flex; flex-direction: column;
  font-family: "Noto Sans", "Open Sans", sans-serif; font-size: 12px; color: #e6e6e6;
  background: #1d1d1d;
}
button { font: inherit; color: inherit; background: none; border: 0; padding: 0; }
a { color: inherit; text-decoration: none; }
p, h1, h2, dl, dd, dt { margin: 0; font-weight: 400; }
svg { display: block; flex: none; fill: currentColor; }
.defs { position: absolute; width: 0; height: 0; }
.i8 { width: 8px; height: 6px; }
.i12 { width: 12px; height: 12px; }
.i14 { width: 14px; height: 14px; }
.i16 { width: 16px; height: 16px; }
.i18 { width: 18px; height: 18px; }
.b18 { width: 18px; height: 18px; }
.b32 { width: 32px; height: 32px; }

/* system bar */
.topbar { flex: none; height: 23px; display: flex; align-items: center; padding: 0 12px 0 10px; position: relative; background: #1d1d1d; }
.app-menu { display: flex; align-items: center; gap: 6px; padding-left: 30px; }
.clock { position: absolute; left: 58px; right: 0; width: max-content; margin: 0 auto; }
.tray { margin-left: auto; display: flex; align-items: center; gap: 12px; }
.tray svg:last-child { margin-left: -3px; }
.zoomapp { margin: 0 12px 0 9px; }

.desktop { flex: 1; min-height: 0; display: flex; }
.dock { width: 57px; flex: none; display: flex; flex-direction: column; align-items: center; background: linear-gradient(#4c2228, #33172f 25%, #2c162b 70%, #251827); padding-top: 4px; border-right: 1px solid #222; }
.dock a { position: relative; width: 50px; height: 50px; margin-bottom: 3px; border-radius: 3px; display: flex; align-items: center; justify-content: center; }
.dock a svg { width: 36px; height: 36px; }
.dock .current { background: #554356; }
.dock .running::before { content: ""; position: absolute; left: 0; top: 23px; width: 5px; height: 5px; border-radius: 50%; background: #e2542a; }
.dock .all-apps { margin-top: auto; margin-bottom: 1px; }

/* browser chrome */
.window { flex: 1; min-width: 0; display: flex; flex-direction: column; background: #3c3c3c; }
.tabstrip { height: 28px; flex: none; display: flex; align-items: flex-end; background: #2a2a2a; padding-right: 11px; }
.tab { flex: none; width: 199px; height: 27px; display: flex; align-items: center; gap: 6px; padding: 0 9px 1px 10px; position: relative; }
.tab:first-child { width: 206px; padding-left: 16px; }
.tab.divided::after { content: ""; position: absolute; right: 0; top: 5px; height: 17px; border-right: 1px solid #555; }
.tab.active { background: #3c3c3c; border-radius: 6px 6px 0 0; }
.tab-title { flex: 1; white-space: nowrap; -webkit-mask-image: linear-gradient(90deg, #000 75%, transparent); mask-image: linear-gradient(90deg, #000 75%, transparent); }
.x { width: 8px; height: 8px; flex: none; background: linear-gradient(45deg, transparent 43%, #eee 43%, #eee 57%, transparent 57%), linear-gradient(-45deg, transparent 43%, #eee 43%, #eee 57%, transparent 57%); }
.x.dim { opacity: .7; }
.plus { width: 11px; height: 11px; align-self: center; margin-left: 13px; background: linear-gradient(#eee, #eee) center / 11px 2px no-repeat, linear-gradient(#eee, #eee) center / 2px 11px no-repeat; }
.window-buttons { margin-left: auto; align-self: center; display: flex; align-items: center; gap: 21px; }
.toolbar { flex: none; height: 29px; display: flex; align-items: center; gap: 12px; padding: 0 11px; background: #3c3c3c; }
.omnibox { flex: 1; height: 24px; border-radius: 12px; background: #333; display: flex; align-items: center; gap: 8px; padding: 0 8px 0 9px; }
.omnibox .i14 { margin-left: 6px; }
.address { flex: 1; min-width: 0; height: 20px; padding: 0; border: 0; font: inherit; color: #fff; -webkit-text-fill-color: transparent; background: linear-gradient(90deg, #f5f5f5 51px, #9a9a9a 51px); -webkit-background-clip: text; background-clip: text; }
.bookmarks { flex: none; height: 29px; display: flex; align-items: center; gap: 14px; padding: 0 12px 2px; background: #3c3c3c; border-bottom: 1px solid #333; white-space: nowrap; }
.bookmarks a { display: flex; align-items: center; gap: 7px; }
.cut { width: 91px; }
.bm-end { margin-left: auto; display: flex; align-items: center; gap: 8px; }
.bm-end a { border-left: 1px solid #222; padding-left: 9px; height: 14px; }
.more { font-size: 16px; line-height: 14px; }

.content { flex: 1; min-height: 0; position: relative; overflow: hidden; display: flex; background: #000; }

/* WAVE sidebar */
.wave { width: 316px; flex: none; padding: 13px 12px; background: #d4d8df; color: #222; position: relative; z-index: 3; }
.wave-head { display: flex; justify-content: space-between; padding-right: 22px; border-bottom: 1px solid #b3b8bf; height: 57px; margin-bottom: 13px; }
.wave-logo { display: flex; align-items: center; gap: 8px; height: 37px; font: 300 34px/36px "Open Sans", sans-serif; color: #444; }
.wave-logo svg { width: 37px; height: 37px; }
.wave-sub { font-size: 10px; line-height: 18px; color: #444; white-space: nowrap; padding-left: 2px; }
.powered { font-size: 12px; line-height: 16px; padding-top: 11px; color: #444; }
.powered a { color: #2260c4; text-decoration: underline; }
.styles-box { height: 36px; background: #fff; border-radius: 3px; display: flex; align-items: center; justify-content: center; gap: 5px; padding: 4px 32px 0 0; }
.styles-label { font-size: 13px; margin-right: 5px; }
.onoff { font-size: 10px; }
.toggle { appearance: none; margin: 0; width: 35px; height: 18px; border-radius: 9px; background: radial-gradient(circle at 26px 9px, #4674b8 8px, transparent 9px), linear-gradient(#9bbfca, #9bbfca) 0 center / 34px 12px no-repeat; }
.wave h2 { font-size: 18px; line-height: 40px; color: #222; }
.wave-tabs { display: grid; grid-template-columns: repeat(5, 1fr); height: 44px; background: #e1e4e8; border-radius: 4px 4px 0 0; }
.wave-tabs button { display: flex; flex-direction: column; align-items: center; justify-content: space-between; font-size: 11px; line-height: 16px; color: #222; padding: 6px 0 1px; border-radius: 4px 4px 0 0; }
.wave-tabs svg { width: 18px; height: 18px; color: #96999d; }
.wave-tabs .on { background: #fff; }
.wave-tabs .on svg { color: #3d70b8; }
.wave-tabs .faint svg { width: 20px; color: #c2c4c7; }
.wave-body { background: #fff; border-radius: 0 0 6px 6px; padding: 20px 13px 12px; }
.stats { display: grid; grid-template-columns: 1fr 1fr; row-gap: 25px; margin: 0 8px 0 0; }
.stats div { height: 59px; text-align: center; }
.stats div:nth-child(odd) { border-right: 1px solid #bbb; }
.stats dd { display: flex; justify-content: center; align-items: center; gap: 7px; font-size: 24px; line-height: 30px; height: 30px; margin-top: 14px; color: #444; }
.stats dt { font-size: 11px; line-height: 16px; color: #555; margin-top: 3px; white-space: nowrap; }
.stats svg { width: 16px; height: 16px; }
.stats svg.wide { width: 20px; height: 20px; }
.stats svg.blue { width: 18px; color: #4674b8; }
.stats svg.red { color: #b8323a; }
.view { display: flex; align-items: center; justify-content: center; gap: 12px; width: 121px; height: 26px; margin: 24px auto 0; padding-left: 5px; border-radius: 4px; background: #4674b8; color: #fff; font-size: 12px; white-space: nowrap; }
.view svg { width: 16px; height: 14px; }

/* dimmed page behind the dialog */
.site { flex: 1; min-width: 0; position: relative; padding-top: 29px; font-family: "Liberation Sans", Arial, sans-serif; }
.backdrop { position: absolute; left: 0; top: 0; width: 100%; height: 100%; }
.band { position: relative; height: 28px; background: #424242; }
.menu-dot { position: absolute; left: -12px; top: 40px; width: 24px; height: 20px; }
.themes { position: absolute; left: 15px; top: 37px; width: 100px; height: 29px; background: #000; color: #777; font-size: 12px; display: flex; align-items: center; gap: 3px; padding-left: 6px; }
.horn { position: absolute; left: 2px; top: 60px; width: 32px; height: 32px; }
.user-nav { position: absolute; right: 313px; top: 74px; width: 77px; height: 29px; background: #000; display: flex; align-items: center; gap: 4px; }
.user-nav .caret { width: 6px; height: 4px; margin-top: 3px; }
.user-nav .b32 { opacity: .45; margin-top: 2px; }
.exit { width: 17px; height: 14px; margin-left: 9px; margin-top: -3px; color: #7d5600; }
.listbadge { position: absolute; right: 279px; top: 76px; width: 32px; height: 32px; }
.cards { position: relative; margin: 141px 130px 0 180px; font-size: 13px; color: #4b4b4b; }
.card-head, .stripe { height: 28px; line-height: 28px; display: flex; justify-content: flex-end; }
.card-head { background: #060606; margin-bottom: 12px; }
.card-head span, .stripe span { width: 225px; }
.card { background: #040404; height: 73px; margin-bottom: 16px; }
.stripe { background: #3c3b32; color: #111; }
.tools { display: flex; justify-content: flex-end; padding-right: 13px; color: #484848; }
.tools div { display: flex; align-items: center; gap: 12px; width: 226px; padding-top: 13px; }
.tools svg { width: 16px; height: 16px; }
.tools .thin { width: 12px; }
.tools .inf { width: 14px; height: 14px; margin-top: 6px; }
.scroll { width: 8px; flex: none; background: #050505; border: 1px solid #222; border-width: 0 0 1px 1px; border-radius: 4px; }
.thumb { height: 59%; width: 8px; margin-left: -1px; background: #ff8c00; border-radius: 4px; }

/* dialog */
.modal { position: absolute; z-index: 2; left: 0; right: 1px; top: 25px; width: 750px; margin: 0 auto; min-height: 100%; background: #212121; border-radius: 30px 30px 0 0; padding: 24px 41px 0 42px; font-family: "Liberation Sans", Arial, sans-serif; }
.modal-head { display: flex; justify-content: space-between; align-items: flex-start; height: 62px; }
.signs { width: 38px; height: 38px; color: #131313; }
.close { margin: 6px 8px 0 0; }
.close svg { width: 24px; height: 24px; fill: none; }
.badge-row { height: 36px; padding-left: 2px; border-bottom: 1px solid #ddd; }
.modal h1 { height: 50px; display: flex; align-items: center; gap: 8px; padding: 0 0 1px 8px; font-size: 20px; color: #efddb0; }
.modal table { width: 100%; border-collapse: collapse; background: #47474c; }
.modal td { vertical-align: top; padding: 7px 7px 6px; border-top: 1px solid #ccc; height: 56px; font-size: 13px; line-height: 18px; color: #f2f2f2; }
.modal .create td { height: 110px; border-top-width: 2px; padding-top: 6px; }
.modal .tall td { height: 69px; }
.modal .act { padding: 15px 8px 0 0; text-align: right; width: 210px; }
.combo { display: flex; margin-top: 8px; height: 26px; }
.pick { width: 415px; height: 25px; border-radius: 13px; background: #1a2233; padding-left: 8px; display: flex; align-items: center; gap: 1px; font-size: 12px; color: #eee; }
.drop { width: 21px; display: flex; flex-direction: column; align-items: center; gap: 1px; }
.drop button { width: 21px; height: 25px; flex: none; border-radius: 10px; background: #f4f4f4; color: #111; display: flex; align-items: center; justify-content: center; }
.drop button svg { width: 6px; height: 4px; }
.err { width: 32px; height: 32px; margin: 2px 0 0 2px; }
.pill { display: inline-flex; align-items: center; gap: 2px; height: 25px; border-radius: 13px; background: #1a2233; color: #eee; padding: 0 8px 0 11px; font-size: 12px; white-space: nowrap; box-shadow: 0 1px 2px rgba(0,0,0,.4); }
.pill.many { gap: 3px; padding-left: 10px; }
.pill.tight { padding: 0 7px; }
.pill.light { background: #d3d3d3; color: #111; }
.pill svg { width: 12px; height: 13px; }
.pill .capi { width: 14px; }
.pill .clipi { width: 9px; }
.pill .dots { height: 12px; }
.tags { display: flex; gap: 5px; margin-top: 2px; height: 17px; font-size: 10px; line-height: 16px; color: #eee; }
.tall .tags { margin-top: 9px; }
.tags span { padding: 0 6px; white-space: nowrap; display: flex; align-items: center; }
.tags .n { background: #7b7b7b; color: #2c2c2c; }
.tags .thm { background: #5b6258; }
.tags .bonus { background: #3b1350; }
.tags .mit { background: #2358d2; padding-right: 43px; position: relative; }
.tags .frei { background: #5b3a36; }
.tags .rep { background: #a5282c; }
.tags .cc { background: #fff; color: #111; gap: 4px; padding: 0 8px; margin-right: -4px; }
.tags .cc svg { width: 11px; height: 11px; }
.tags .lern { background: #2f4c4a; }
.tags .frag { background: #068080; gap: 2px; }
.tags .frag svg { width: 12px; height: 11px; }
.warn { position: absolute; right: 8px; top: -7px; width: 33px; height: 33px; }
.code { position: absolute; z-index: 3; left: 333px; right: 0; margin: 0 auto; bottom: -37px; width: 76px; height: 75px; display: flex; flex-direction: column; align-items: center; justify-content: flex-start; padding-top: 2px; background: #1a998d; clip-path: polygon(50% 0, 100% 15%, 100% 85%, 50% 100%, 0 85%, 0 15%); color: #fff; font-size: 12px; line-height: 14px; }
.code svg { width: 42px; height: 21px; }

/* download shelf */
.downloads { flex: none; height: 51px; display: flex; align-items: center; padding: 0 11px 0 16px; background: #3b3b3b; border-top: 1px solid #333; }
.dl { display: flex; align-items: center; gap: 12px; height: 40px; padding-right: 15px; border-right: 1px solid #222; font-size: 13px; }
.dl button { margin-left: 5px; }
.all { margin-left: auto; margin-right: 11px; width: 105px; height: 26px; border: 1px solid #262626; border-radius: 3px; background: #444; font-size: 12px; font-weight: 600; }
```
